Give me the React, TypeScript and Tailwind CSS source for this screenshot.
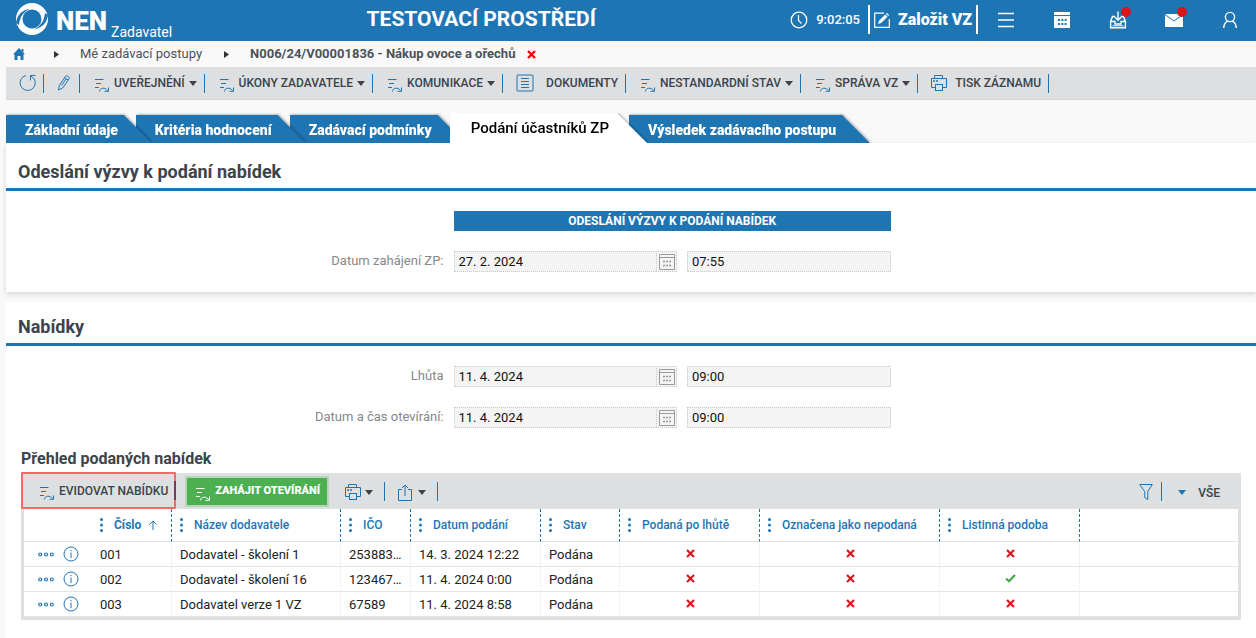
import React from "react";

const BLUE = "#1e75b4";

function Logo() {
  return (
    <svg width="32" height="32" viewBox="0 0 32 32" aria-hidden="true">
      <circle cx="16" cy="16" r="16" fill="#fff" />
      <circle cx="16" cy="16" r="9.5" fill={BLUE} />
      <path d="M0 20 C1 12 6 7 14 5.5 C8 8.500 4 13 3 22z" fill={BLUE} />
      <path d="M32 12 C31 20 26 25 18 26.5 C24 23.500 28 19 29 10z" fill={BLUE} />
    </svg>
  );
}

function ClockIcon() {
  return (
    <svg width="18" height="18" viewBox="0 0 18 18" fill="none" stroke="#fff" aria-hidden="true">
      <circle cx="9" cy="9" r="7.8" strokeWidth="1.3" />
      <path d="M8.5 4v5.5l3 3" strokeWidth="1.2" />
    </svg>
  );
}

function EditIcon() {
  return (
    <svg width="16" height="16" viewBox="0 0 16 16" fill="none" stroke="#fff" aria-hidden="true">
      <path d="M10 1.1H.7v14.2h14.6V7" strokeWidth="1.2" />
      <path d="M4 12l1-3.2L11.3 2.500 13.500 4.700 7.200 11z" fill="#fff" stroke="none" />
      <path d="M12 1.800l.9-.9 2.200 2.200-.9.9z" fill="#fff" stroke="none" />
    </svg>
  );
}

function MenuIcon() {
  return (
    <svg width="18" height="18" viewBox="0 0 18 18" stroke="#fff" strokeWidth="1.500" aria-hidden="true">
      <path d="M1 2.500h16M1 9h16M1 15.500h16" />
    </svg>
  );
}

function CalendarSolidIcon() {
  return (
    <svg width="18" height="18" viewBox="0 0 18 18" aria-hidden="true">
      <path d="M1 1h16v3H1zM1 5h16v12H1z" fill="#fff" />
      <path
        d="M5 8h2v2H5zM8.300 8h2v2h-2zM11.600 8h2v2h-2zM5 12h2v2H5zM8.300 12h2v2h-2zM11.600 12h2v2h-2z"
        fill={BLUE}
      />
    </svg>
  );
}

function InboxIcon() {
  return (
    <svg width="18" height="18" viewBox="0 0 18 18" fill="none" stroke="#fff" strokeWidth="1.400" aria-hidden="true">
      <path d="M6 5.500H3.500L1.600 10.500v6.200h14.800v-6.200L14.500 5.500H12M1.600 10.500h4.400v2.500h6v-2.500h4.400" />
      <path d="M9 0.500v8.500M5.800 6L9 9.200 12.200 6" />
      <path d="M3.500 14.800h11" strokeWidth="1" />
    </svg>
  );
}

function MailIcon() {
  return (
    <svg width="18" height="18" viewBox="0 0 18 18" aria-hidden="true">
      <path d="M0 3h18v13H0z" fill="#fff" />
      <path d="M0 3.500l9 6.500 9-6.500" fill="none" stroke={BLUE} strokeWidth="1" />
    </svg>
  );
}

function UserIcon() {
  return (
    <svg width="18" height="18" viewBox="0 0 18 18" fill="none" stroke="#fff" strokeWidth="1.400" aria-hidden="true">
      <circle cx="9" cy="6" r="4.600" />
      <path d="M2.800 17c0-3.500 1.600-5.600 3.800-6.800M15.200 17c0-3.500-1.600-5.600-3.800-6.800" />
    </svg>
  );
}

function HomeIcon() {
  return (
    <svg width="12" height="12" viewBox="0 0 12 12" fill={BLUE} aria-hidden="true">
      <path d="M6 0l6 6.500h-1.500V12H7.500V8h-3v4H1.500V6.500H0L6 0z" />
      <path d="M8.500 1H10.500v3.500L8.500 3z" />
    </svg>
  );
}

function RefreshIcon() {
  return (
    <svg width="18" height="18" viewBox="0 0 18 18" fill="none" stroke={BLUE} strokeWidth="1" aria-hidden="true">
      <path d="M7 1.500A7.600 7.600 0 1 0 14.500 4" />
      <path d="M16.500 1.500H11.500V6.500M11.500 1.500L14.500 4.500" />
    </svg>
  );
}

function PencilIcon() {
  return (
    <svg width="14" height="18" viewBox="0 0 14 18" fill="none" stroke={BLUE} strokeWidth="1" aria-hidden="true">
      <path d="M1.500 16l.8-4.500L8.500 2.300c1-1.300 4.500.6 3.700 2.400L5.600 14z" />
      <path d="M9 5L4.500 11.500M7.500 3.800l3.600 2.200" />
    </svg>
  );
}

function ActionIcon({ color = BLUE }: { color?: string }) {
  return (
    <svg width="14" height="14" viewBox="0 0 14 14" fill="none" stroke={color} strokeWidth="1" aria-hidden="true">
      <path d="M0 1.500h8.500M1 5.500h5M0 9.500h4" />
      <path d="M4.500 13.500c0-4 6-4.500 8-.8M13.500 9.500v3.800h-4" />
    </svg>
  );
}

function DocumentIcon() {
  return (
    <svg width="18" height="18" viewBox="0 0 18 18" fill="none" stroke={BLUE} strokeWidth="1" aria-hidden="true">
      <rect x="1" y="1" width="16" height="16" rx="1" />
      <path d="M5 4.500h8M5 7.500h8M5 10.500h8M5 13.500h8" />
    </svg>
  );
}

function PrinterIcon() {
  return (
    <svg width="16" height="16" viewBox="0 0 16 16" fill="none" stroke={BLUE} strokeWidth="1" aria-hidden="true">
      <path d="M3.500 3.500v-3h8v3M4 12.500H.5v-9h15v9H12" />
      <rect x="4.500" y="9.500" width="7" height="6" />
      <path d="M2 6h2M5 6h2" strokeWidth="1.500" />
    </svg>
  );
}

function ShareIcon() {
  return (
    <svg width="14" height="17" viewBox="0 0 14 17" fill="none" stroke={BLUE} strokeWidth="1" aria-hidden="true">
      <path d="M4 5.500H.5v11h13v-11H10M7 12V1M4 4l3-3 3 3" />
    </svg>
  );
}

function FilterIcon() {
  return (
    <svg width="14" height="16" viewBox="0 0 14 16" fill="none" stroke={BLUE} strokeWidth="1" aria-hidden="true">
      <path d="M.7.500h12.600L8.800 7.500v8L5.700 13.500v-6z" />
    </svg>
  );
}

function CalendarIcon() {
  return (
    <svg width="16" height="16" viewBox="0 0 16 16" fill="none" stroke="#9a9a9a" aria-hidden="true">
      <path d="M.5.500h15v15H.5zM.5 3.500h15" />
      <path d="M4 7.500h2M7 7.500h2M10 7.500h2M4 11.500h2M7 11.500h2M10 11.500h2" strokeWidth="1.500" />
    </svg>
  );
}

function Caret({ color = "#3b444c" }: { color?: string }) {
  return (
    <svg width="8" height="5" viewBox="0 0 8 5" fill={color} aria-hidden="true">
      <path d="M0 0h8L4 5z" />
    </svg>
  );
}

function CrumbArrow() {
  return (
    <svg width="5" height="7" viewBox="0 0 5 7" fill="#333" aria-hidden="true">
      <path d="M0 0l5 3.500L0 7z" />
    </svg>
  );
}

function Cross({ color = "#d71920" }: { color?: string }) {
  return (
    <svg width="9" height="9" viewBox="0 0 9 9" stroke={color} strokeWidth="2.200" className="inline-block" role="img" aria-label="Ne">
      <path d="M1 1l7 7M8 1L1 8" />
    </svg>
  );
}

function Check() {
  return (
    <svg width="11" height="9" viewBox="0 0 11 9" fill="none" stroke="#45a849" strokeWidth="2.200" className="inline-block" role="img" aria-label="Ano">
      <path d="M1 4.500L4 7.200 10 1" />
    </svg>
  );
}

function Separator() {
  return <span className="h-[19px] w-px shrink-0 bg-[#1e75b4]" />;
}

function ToolbarMenu({ label }: { label: string }) {
  return (
    <>
      <button type="button" className="flex items-center pl-[15px] pr-[7px]">
        <span className="mt-1 mr-[5px]"><ActionIcon /></span>
        <span className="mr-1">{label}</span>
        <Caret />
      </button>
      <Separator />
    </>
  );
}

function Header() {
  const badge = <span className="absolute -top-1 left-3 size-[10px] rounded-full bg-[#d8171c]" />;
  return (
    <header className="flex h-[41px] items-center bg-[#1e75b4] text-white">
      <a href="#" className="ml-4 flex h-full items-center">
        <span className="-mt-1"><Logo /></span>
        <span className="ml-2 text-[26px]/[32px] font-black">NEN</span>
        <span className="ml-1 self-end text-[14px]/[18px]">Zadavatel</span>
      </a>
      <h1 className="mb-[2px] flex-1 text-center text-[21px] font-bold">TESTOVACÍ PROSTŘEDÍ</h1>
      <div className="mb-[2px] flex items-center text-[13px] font-medium">
        <ClockIcon />
        <span className="ml-2">9:02:05</span>
      </div>
      <button type="button" className="mb-[2px] ml-2 flex h-[29px] items-center gap-2 border-x-2 border-white px-1 text-base font-black">
        <EditIcon />
        Založit VZ
      </button>
      <nav className="mb-[2px] flex items-center gap-[38px] pr-[17px] pl-[19px]">
        <button type="button" aria-label="Menu"><MenuIcon /></button>
        <button type="button" aria-label="Kalendář"><CalendarSolidIcon /></button>
        <button type="button" aria-label="Doručené" className="relative"><InboxIcon />{badge}</button>
        <button type="button" aria-label="Zprávy" className="relative"><MailIcon />{badge}</button>
        <button type="button" aria-label="Profil"><UserIcon /></button>
      </nav>
    </header>
  );
}

function Breadcrumb() {
  return (
    <nav className="flex h-[26px] items-center pl-[13px] text-[13px] text-[#4b5359]">
      <a href="#" aria-label="Domů"><HomeIcon /></a>
      <span className="ml-[29px]"><CrumbArrow /></span>
      <a href="#" className="ml-[21px]">Mé zadávací postupy</a>
      <span className="ml-[22px]"><CrumbArrow /></span>
      <span className="ml-[21px] font-bold">N006/24/V00001836 - Nákup ovoce a ořechů</span>
      <button type="button" aria-label="Zavřít" className="ml-3"><Cross color="#f00000" /></button>
    </nav>
  );
}

function Toolbar() {
  return (
    <div className="ml-[6px] flex h-[33px] items-center border-b border-[#d5d8db] bg-[#dedfe1] text-[12px] font-medium text-[#3b444c]">
      <button type="button" aria-label="Obnovit" className="pr-[6px] pl-[13px]"><RefreshIcon /></button>
      <Separator />
      <button type="button" aria-label="Upravit" className="pr-[8px] pl-[13px]"><PencilIcon /></button>
      <Separator />
      <ToolbarMenu label="UVEŘEJNĚNÍ" />
      <ToolbarMenu label="ÚKONY ZADAVATELE" />
      <ToolbarMenu label="KOMUNIKACE" />
      <button type="button" className="flex items-center gap-3 pr-[7px] pl-[13px]"><DocumentIcon />DOKUMENTY</button>
      <Separator />
      <ToolbarMenu label="NESTANDARDNÍ STAV" />
      <ToolbarMenu label="SPRÁVA VZ" />
      <button type="button" className="flex items-center gap-2 pr-[7px] pl-[13px]"><PrinterIcon />TISK ZÁZNAMU</button>
      <Separator />
    </div>
  );
}

function Tabs() {
  const tab =
    "h-7 bg-[#1e75b4] pt-[2px] pr-[34px] pl-[19px] text-[14px] font-black text-white [clip-path:polygon(0_0,calc(100%-28px)_0,100%_100%,0_100%)]";
  const item = "relative [filter:drop-shadow(1px_-1px_1px_rgba(0,0,0,0.25))]";
  return (
    <div className="mt-[13px] ml-[6px] overflow-hidden">
      <ul className="flex h-[30px] items-end" role="tablist">
        <li className={item + " z-40"}><button type="button" role="tab" className={tab}>Základní údaje</button></li>
        <li className={item + " z-30 -ml-4"}><button type="button" role="tab" className={tab}>Kritéria hodnocení</button></li>
        <li className={item + " z-20 -ml-4"}><button type="button" role="tab" className={tab}>Zadávací podmínky</button></li>
        <li className={item + " z-50 -ml-4"}>
          <button
            type="button"
            role="tab"
            aria-selected="true"
            className="h-[30px] bg-white pr-[38px] pl-[21px] text-[15px] font-medium text-black [clip-path:polygon(0_0,calc(100%-30px)_0,100%_100%,0_100%)]"
          >
            Podání účastníků ZP
          </button>
        </li>
        <li className={item + " z-10 -ml-[18px]"}><button type="button" role="tab" className={tab}>Výsledek zadávacího postupu</button></li>
      </ul>
    </div>
  );
}

function DateTimeRow({ id, label, date, time }: { id: string; label: string; date: string; time: string }) {
  const box = "h-[21px] min-w-0 border border-dotted border-[#c8c8c8] bg-[#f4f4f4] px-1 text-[13px] text-[#111]";
  return (
    <div className="mt-5 flex gap-[10px]">
      <label htmlFor={id} className="w-[35%] text-right text-[13px]/[19px] text-[#85888a]">{label}</label>
      <div className="grid w-[35%] grid-cols-[1fr_204px] gap-[10px]">
        <div className="flex">
          <input id={id} readOnly value={date} className={box + " flex-1 border-r-0"} />
          <button type="button" aria-label="Vybrat datum" className="flex h-[21px] w-[21px] items-center justify-center border border-dotted border-[#c8c8c8] bg-[#f4f4f4]">
            <CalendarIcon />
          </button>
        </div>
        <input aria-label={label + " čas"} readOnly value={time} className={box} />
      </div>
    </div>
  );
}

function SectionTitle({ children }: { children: React.ReactNode }) {
  return <h2 className="border-b-3 border-[#1e75b4] pt-[13px] pb-1 pl-3 text-lg/[24px] font-bold text-[#3b444c]">{children}</h2>;
}

const columns = [
  { label: "Číslo", width: "w-[80px]", sorted: true },
  { label: "Název dodavatele", width: "w-[169px]" },
  { label: "IČO", width: "w-[70px]" },
  { label: "Datum podání", width: "w-[130px]" },
  { label: "Stav", width: "w-[79px]" },
  { label: "Podaná po lhůtě", width: "w-[140px]" },
  { label: "Označena jako nepodaná", width: "w-[180px]" },
  { label: "Listinná podoba", width: "w-[140px]" },
];

const rows = [
  { cells: ["001", "Dodavatel - školení 1", "25388347", "14. 3. 2024 12:22", "Podána"], flags: [false, false, false] },
  { cells: ["002", "Dodavatel - školení 16", "12346789", "11. 4. 2024 0:00", "Podána"], flags: [false, false, true] },
  { cells: ["003", "Dodavatel verze 1 VZ", "67589", "11. 4. 2024 8:58", "Podána"], flags: [false, false, false] },
];

function BidsTable() {
  return (
    <table className="w-full table-fixed border-separate border-spacing-0 bg-white">
      <thead>
        <tr className="h-[33px] text-left text-[12px] text-[#1e75b4]">
          <th className="w-[68px] border-b border-[#dfe5ea]" aria-label="Akce" />
          {columns.map((c) => (
            <th key={c.label} className={c.width + " border-r border-b border-r-[#1e75b4] border-b-[#dfe5ea] p-0 [border-right-style:dashed]"}>
              <div className="flex items-center pl-2 whitespace-nowrap">
                <svg width="3" height="14" viewBox="0 0 3 14" fill={BLUE} aria-hidden="true">
                  <circle cx="1.5" cy="1.5" r="1.5" />
                  <circle cx="1.5" cy="7" r="1.5" />
                  <circle cx="1.5" cy="12.500" r="1.5" />
                </svg>
                <span className={c.sorted ? "ml-[11px] font-bold" : "ml-[11px] font-medium"}>{c.label}</span>
                {c.sorted && (
                  <svg width="8" height="10" viewBox="0 0 8 10" fill="none" stroke={BLUE} className="ml-2" aria-hidden="true">
                    <path d="M4 10V1M.5 4.500L4 1l3.500 3.500" />
                  </svg>
                )}
              </div>
            </th>
          ))}
          <th className="border-b border-[#dfe5ea]" aria-label="Volný sloupec" />
        </tr>
      </thead>
      <tbody className="text-[13px] text-[#222]">
        {rows.map((r) => (
          <tr key={r.cells[0]} className="h-[25px]">
            <td className="border-b border-[#dfe5ea] p-0">
              <div className="flex items-center pl-[14px]">
                <button type="button" aria-label="Další akce">
                  <svg width="16" height="5" viewBox="0 0 16 5" fill="none" stroke={BLUE} strokeWidth="1.200" aria-hidden="true">
                    <circle cx="2.200" cy="2.500" r="1.500" />
                    <circle cx="8" cy="2.500" r="1.500" />
                    <circle cx="13.800" cy="2.500" r="1.500" />
                  </svg>
                </button>
                <button type="button" aria-label="Detail" className="ml-[9px]">
                  <svg width="16" height="16" viewBox="0 0 16 16" fill="none" stroke={BLUE} aria-hidden="true">
                    <circle cx="8" cy="8" r="7" />
                    <path d="M8 6.500v5.500M8 4v1.200" />
                  </svg>
                </button>
              </div>
            </td>
            {r.cells.map((c, i) => (
              <td key={i} className="truncate border-r border-b border-[#dfe5ea] px-2 pt-px pb-0 [border-right-style:dotted]">{c}</td>
            ))}
            {r.flags.map((f, i) => (
              <td key={i} className="border-r border-b border-[#dfe5ea] p-0 [border-right-style:dotted]">
                <div className="flex justify-center pb-[2px] pl-px">{f ? <Check /> : <Cross />}</div>
              </td>
            ))}
            <td className="border-b border-[#dfe5ea]" />
          </tr>
        ))}
      </tbody>
    </table>
  );
}

function BidsGrid() {
  return (
    <div className="mx-[15px] border-x-3 border-b-3 border-[#dedfe1]">
      <div className="-mx-[3px] flex h-9 items-center bg-[#dedfe1] text-[12px] font-medium text-[#3b444c]">
        <div className="-mt-px flex h-[37px] items-center rounded-[1px] border-2 border-[#f46a6a]">
          <button type="button" className="flex items-center pt-px pr-[6px] pl-[17px]">
            <span className="mt-1 mr-[5px]"><ActionIcon /></span>
            EVIDOVAT NABÍDKU
          </button>
          <span className="-mr-[2px] h-[19px] w-[2px] bg-[#7a3a5c]" />
        </div>
        <button type="button" className="ml-[9px] flex h-[31px] items-center border-2 border-[#b5d6b7] bg-[#4caf50] pt-px pr-[7px] pl-[9px] text-[11px] font-black text-white">
          <span className="mt-1 mr-[5px]"><ActionIcon color="#fff" /></span>
          ZAHÁJIT OTEVÍRÁNÍ
        </button>
        <button type="button" aria-label="Tisk" className="flex items-center gap-1 pt-[2px] pr-[11px] pl-4"><PrinterIcon /><Caret /></button>
        <Separator />
        <button type="button" aria-label="Export" className="flex items-center gap-[6px] pt-[2px] pr-[11px] pl-[13px]"><ShareIcon /><Caret /></button>
        <Separator />
        <button type="button" aria-label="Filtr" className="ml-auto pt-[2px] pr-2"><FilterIcon /></button>
        <Separator />
        <button type="button" className="flex items-center gap-3 pt-[3px] pr-[21px] pl-4"><Caret color={BLUE} />VŠE</button>
      </div>
      <BidsTable />
    </div>
  );
}

export default function App() {
  return (
    <div className="min-h-screen bg-[#f9f9f9] font-['Roboto',sans-serif]">
      <Header />
      <Breadcrumb />
      <Toolbar />
      <Tabs />
      <main className="ml-[6px]">
        <section className="bg-white pt-1 pb-5 shadow-[0_2px_5px_rgba(0,0,0,0.15)]">
          <SectionTitle>Odeslání výzvy k podání nabídek</SectionTitle>
          <div className="mt-5 flex gap-[10px]">
            <span className="w-[35%]" />
            <button type="button" className="h-5 w-[35%] bg-[#1e75b4] text-[12px] font-bold text-white">ODESLÁNÍ VÝZVY K PODÁNÍ NABÍDEK</button>
          </div>
          <DateTimeRow id="start" label="Datum zahájení ZP:" date="27. 2. 2024" time="07:55" />
        </section>
        <section className="mt-[10px] bg-white pb-[18px]">
          <SectionTitle>Nabídky</SectionTitle>
          <DateTimeRow id="deadline" label="Lhůta" date="11. 4. 2024" time="09:00" />
          <DateTimeRow id="opening" label="Datum a čas otevírání:" date="11. 4. 2024" time="09:00" />
          <h3 className="mt-[21px] mb-1 pl-[15px] text-base/[20px] font-bold text-[#3b444c]">Přehled podaných nabídek</h3>
          <BidsGrid />
        </section>
      </main>
    </div>
  );
}
